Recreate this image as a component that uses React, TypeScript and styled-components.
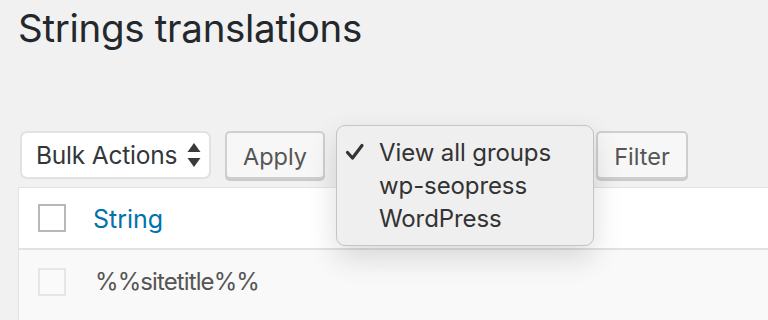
import React from 'react';
import styled, {createGlobalStyle} from 'styled-components';

const GlobalStyle = createGlobalStyle`
  body
  {
    margin: 0;
    background: #f1f1f1;
    font-family: Inter, "Liberation Sans", sans-serif;
    overflow: hidden;
  }
`

const groups = ['View all groups', 'wp-seopress', 'WordPress'];

const App: React.FC = () =>
{
  return (
    <Wrap>
      <GlobalStyle />
      <Title>Strings translations</Title>
      <TableNav>
        <Select>
          Bulk Actions
          <svg width="14" height="24" viewBox="0 0 14 24">
            <path d="M7 0L13.5 9H0.5z" fill="#3a3a3a" />
            <path d="M7 24L13.5 15H0.5z" fill="#3a3a3a" />
          </svg>
        </Select>
        <Button $width={100} $gap={12}>Apply</Button>
        <GroupSelect>
          <Menu>
            {groups.map((g, i) => (
              <MenuItem key={g}>
                {i === 0 && (
                  <svg width="20" height="18" viewBox="0 0 20 18">
                    <path d="M2.5 9.5L7.5 15L17 2.5" fill="none" stroke="#333" strokeWidth="3.2" strokeLinecap="round" strokeLinejoin="round" />
                  </svg>
                )}
                {g}
              </MenuItem>
            ))}
          </Menu>
        </GroupSelect>
        <Button $width={92} $gap={0}>Filter</Button>
      </TableNav>
      <Table>
        <HeadRow>
          <Check />
          <HeadLink>String</HeadLink>
        </HeadRow>
        <BodyRow>
          <Check $muted />
          <Cell>%%sitetitle%%</Cell>
        </BodyRow>
      </Table>
    </Wrap>
  );
}

const Wrap = styled.div`
  padding: 0 0 0 18px;
  height: 320px;
  overflow: hidden;
`

const Title = styled.h1`
  margin: 0;
  padding-top: 5px;
  font-size: 38.5px;
  font-weight: 400;
  line-height: 46px;
  letter-spacing: -0.3px;
  color: #23282d;
  height: 131px;
  box-sizing: border-box;
`

const TableNav = styled.div`
  display: flex;
  align-items: flex-start;
  height: 50px;
  padding-left: 2px;
`

const Select = styled.div`
  display: flex;
  align-items: center;
  justify-content: space-between;
  box-sizing: border-box;
  width: 191px;
  height: 48px;
  padding: 0 8px 0 14px;
  margin-right: 14px;
  background: #fff;
  border: 2px solid #e2e2e2;
  border-radius: 7px;
  font-size: 24.5px;
  letter-spacing: -0.2px;
  color: #32373c;
`

const Button = styled.div<{$width: number; $gap: number}>`
  display: flex;
  align-items: center;
  justify-content: center;
  box-sizing: border-box;
  width: ${p => p.$width}px;
  height: 48px;
  margin-right: ${p => p.$gap}px;
  background: #f7f7f7;
  border: 2px solid #cfcfcf;
  border-radius: 5px;
  box-shadow: 0 2px 0 #cacaca;
  font-size: 23.5px;
  padding-top: 2px;
  color: #555;
`

const GroupSelect = styled.div`
  position: relative;
  width: 249px;
  height: 48px;
  margin-right: 10px;
`

const Menu = styled.div`
  position: absolute;
  z-index: 2;
  left: -1px;
  top: -6px;
  width: 258px;
  box-sizing: border-box;
  padding: 10px 0 10px;
  background: #efefef;
  border: 1px solid #c4c4c4;
  border-radius: 9px;
  box-shadow: 0 12px 30px rgba(0, 0, 0, 0.14);
`

const MenuItem = styled.div`
  position: relative;
  padding-left: 42px;
  font-size: 24px;
  line-height: 33px;
  letter-spacing: -0.1px;
  color: #333;
  svg
  {
    position: absolute;
    left: 8px;
    top: 7px;
  }
`

const Table = styled.div`
  margin-top: 6px;
  background: #fff;
  border: 1px solid #e3e3e3;
  border-right: none;
`

const HeadRow = styled.div`
  display: flex;
  align-items: center;
  height: 60px;
  padding-left: 19px;
  border-bottom: 2px solid #e1e1e1;
`

const BodyRow = styled.div`
  display: flex;
  align-items: flex-start;
  height: 80px;
  padding: 18px 0 0 19px;
  background: #f9f9f9;
`

const Check = styled.div<{$muted?: boolean}>`
  box-sizing: border-box;
  width: 28px;
  height: 28px;
  border: 2px solid ${p => p.$muted ? '#e6e6e6' : '#b4b9be'};
  background: ${p => p.$muted ? '#fafafa' : '#fff'};
  margin-right: 27px;
`

const HeadLink = styled.a`
  font-size: 25px;
  color: #0073aa;
  margin-top: 2px;
`

const Cell = styled.div`
  font-size: 24px;
  line-height: 28px;
  margin-left: 2px;
  letter-spacing: -0.9px;
  color: #555;
`

export default App
